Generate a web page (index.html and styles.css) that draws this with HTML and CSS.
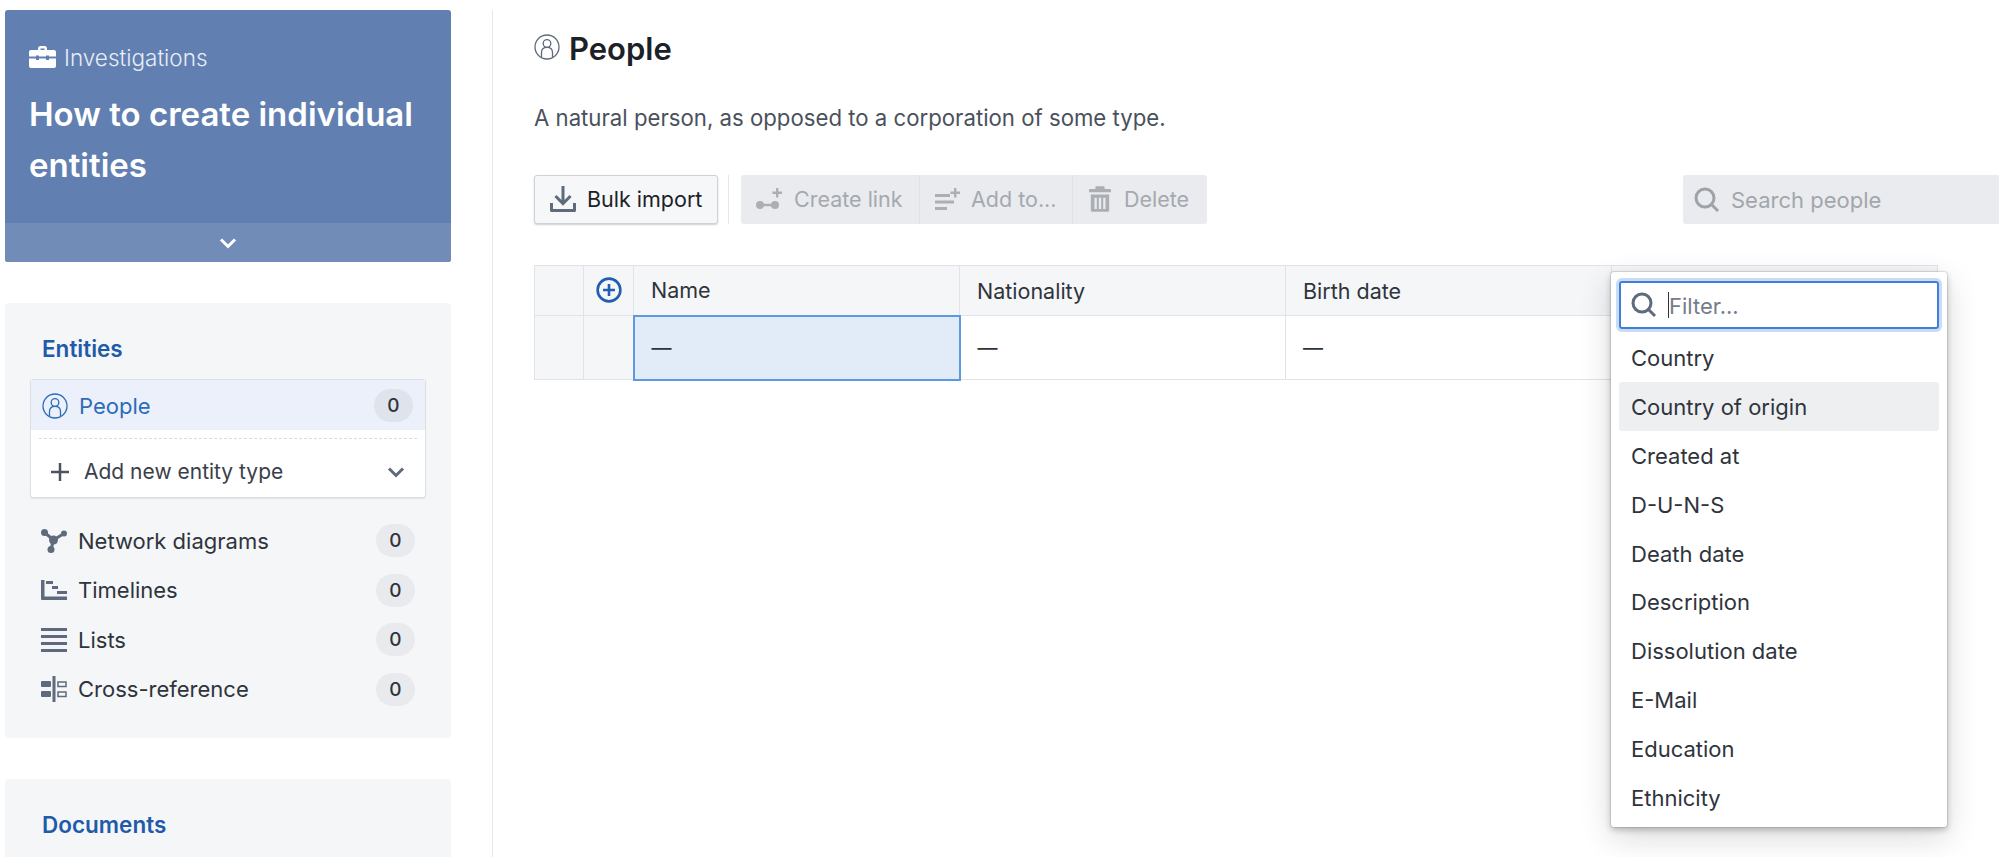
FILE: index.html
```html
<!DOCTYPE html>
<html lang="en">
<head>
  <meta charset="UTF-8">
  <title>People</title>
  <link rel="stylesheet" href="styles.css">
</head>
<body>
  <aside class="sidebar">
    <section class="hero">
      <div class="hero-body">
        <div class="hero-type">
          <svg class="hero-icon" viewBox="0 0 27 22"><path d="M9 4V2.500C9 1 10 0 11.500 0h4C17 0 18 1 18 2.500V4h7c1.200 0 2 .8 2 2v4.500H20V9.500h-3v1H10v-1H7v1H0V6c0-1.200.8-2 2-2zm2.500 0h4V2.500h-4zM0 12.500h7v1.500h3v-1.500h7v1.500h3v-1.500h7V20c0 1.200-.8 2-2 2H2c-1.200 0-2-.8-2-2z"/></svg>
          <span>Investigations</span>
        </div>
        <h1>How to create individual entities</h1>
      </div>
      <div class="hero-toggle">
        <svg class="chevron" viewBox="0 0 18 12"><path d="M2 2.500l7 7 7-7"/></svg>
      </div>
    </section>

    <section class="card card-entities">
      <h2>Entities</h2>
      <div class="schema-box">
        <div class="schema-active">
          <svg class="person-icon" viewBox="0 0 26 26"><circle cx="13" cy="13" r="12"/><circle cx="13" cy="9.500" r="3.800"/><path d="M7.500 23v-4.500c0-3 2-5.200 5.500-5.200s5.500 2.200 5.500 5.200V23"/></svg>
          <span class="row-label">People</span>
          <span class="count">0</span>
        </div>
        <div class="schema-add">
          <svg class="plus-icon" viewBox="0 0 20 20"><path d="M10 1v18M1 10h18"/></svg>
          <span class="row-label">Add new entity type</span>
          <svg class="chevron chevron-dark" viewBox="0 0 18 12"><path d="M2 2.500l7 7 7-7"/></svg>
        </div>
      </div>
      <ul class="nav-list">
        <li>
          <svg class="nav-icon" viewBox="0 0 26 24"><circle cx="3.500" cy="3.500" r="3.500"/><circle cx="23" cy="4.500" r="3"/><circle cx="10" cy="20.500" r="3.500"/><circle cx="12.500" cy="11" r="4.500"/><path class="nav-line" d="M3.500 3.500l9 7.500 10.500-6.500M12.500 11L10 20.500"/></svg>
          <span class="row-label">Network diagrams</span>
          <span class="count">0</span>
        </li>
        <li>
          <svg class="nav-icon" viewBox="0 0 26 20"><path d="M0 0h3.500v16.500H26V20H1a1 1 0 0 1-1-1zM5 1h7v3H5zM11 6h6v3h-6zM16 11h10v3H16z"/></svg>
          <span class="row-label">Timelines</span>
          <span class="count">0</span>
        </li>
        <li>
          <svg class="nav-icon" viewBox="0 0 26 24"><path d="M0 0h26v3H0zM0 7h26v3H0zM0 14h26v3H0zM0 21h26v3H0z"/></svg>
          <span class="row-label">Lists</span>
          <span class="count">0</span>
        </li>
        <li>
          <svg class="nav-icon" viewBox="0 0 26 26"><path d="M11.500 0h3v26h-3zM1 5h8a1 1 0 0 1 1 1v4a1 1 0 0 1-1 1H1a1 1 0 0 1-1-1V6a1 1 0 0 1 1-1zM1 15h8a1 1 0 0 1 1 1v4a1 1 0 0 1-1 1H1a1 1 0 0 1-1-1v-4a1 1 0 0 1 1-1z"/><path class="nav-outline" d="M17 6h8v4.500h-8zM17 16h8v4.500h-8z"/></svg>
          <span class="row-label">Cross-reference</span>
          <span class="count">0</span>
        </li>
      </ul>
    </section>

    <section class="card card-documents">
      <h2>Documents</h2>
    </section>
  </aside>

  <main class="content">
    <header class="page-title">
      <svg class="title-icon" viewBox="0 0 26 26"><circle cx="13" cy="13" r="12"/><circle cx="13" cy="9.500" r="3.800"/><path d="M7.500 23v-4.500c0-3 2-5.200 5.500-5.200s5.500 2.200 5.500 5.200V23"/></svg>
      <h1>People</h1>
    </header>
    <p class="description">A natural person, as opposed to a corporation of some type.</p>

    <div class="toolbar">
      <button class="btn-import">
        <svg class="tool-icon" viewBox="0 0 26 26"><path class="fill-dark" d="M11.500 0h3v14l5-5 2.100 2.100L13 19.700l-8.600-8.600L6.500 9l5 5zM0 17h3v6h20v-6h3v7.500a1.500 1.500 0 0 1-1.500 1.500h-23A1.500 1.500 0 0 1 0 24.500z"/></svg>
        Bulk import
      </button>
      <span class="tool-sep"></span>
      <div class="btn-group">
        <span class="btn-muted">
          <svg class="tool-icon" viewBox="0 0 26 22"><circle cx="4" cy="17" r="4"/><circle cx="19" cy="17" r="4"/><path d="M4 15.800h15v2.400H4zM20 0h2.400v3.600H26V6h-3.600v3.600H20V6h-3.600V3.600H20z"/></svg>
          Create link
        </span>
        <span class="btn-muted">
          <svg class="tool-icon" viewBox="0 0 26 22"><path d="M0 6h15v3H0zM0 12.500h19v3H0zM0 19h12v3H0zM19 0h2.400v3.600H25V6h-3.600v3.600H19V6h-3.600V3.600H19z"/></svg>
          Add to...
        </span>
        <span class="btn-muted">
          <svg class="tool-icon tool-trash" viewBox="0 0 24 28"><path d="M8 0h8a1 1 0 0 1 1 1v2h6a1 1 0 0 1 1 1v2.500H0V4a1 1 0 0 1 1-1h6V1a1 1 0 0 1 1-1zM2 9h20v17.500a1.500 1.500 0 0 1-1.500 1.500h-17A1.500 1.500 0 0 1 2 26.500zm4 3.500V25h2.500V12.500zm4.700 0V25h2.600V12.500zm4.800 0V25H18V12.500z" fill-rule="evenodd"/></svg>
          Delete
        </span>
      </div>
      <div class="search-box">
        <svg class="search-icon" viewBox="0 0 26 26"><circle cx="11" cy="11" r="9"/><path d="M17.500 17.500L24 24"/></svg>
        <span>Search people</span>
      </div>
    </div>

    <div class="grid-wrap">
      <table class="grid">
        <colgroup>
          <col class="col-index"><col class="col-add"><col class="col-data"><col class="col-data"><col class="col-data"><col class="col-data">
        </colgroup>
        <tr class="grid-head">
          <th></th>
          <th>
            <svg class="add-icon" viewBox="0 0 24 24"><circle cx="12" cy="12" r="10.500"/><path d="M12 6.500v11M6.500 12h11"/></svg>
          </th>
          <th>Name</th>
          <th>Nationality</th>
          <th>Birth date</th>
          <th></th>
        </tr>
        <tr class="grid-row">
          <td class="cell-side"></td>
          <td class="cell-side"></td>
          <td class="cell-selected">—</td>
          <td>—</td>
          <td>—</td>
          <td></td>
        </tr>
      </table>

      <div class="column-menu">
        <div class="filter-input">
          <svg class="search-icon search-dark" viewBox="0 0 26 26"><circle cx="11" cy="11" r="9"/><path d="M17.500 17.500L24 24"/></svg>
          <span class="caret"></span>
          <span class="filter-text">Filter...</span>
        </div>
        <ul class="menu-list">
          <li>Country</li>
          <li class="menu-active">Country of origin</li>
          <li>Created at</li>
          <li>D-U-N-S</li>
          <li>Death date</li>
          <li>Description</li>
          <li>Dissolution date</li>
          <li>E-Mail</li>
          <li>Education</li>
          <li>Ethnicity</li>
        </ul>
      </div>
    </div>
  </main>
</body>
</html>
```

FILE: styles.css
```css
* {
  box-sizing: border-box;
}
html, body {
  height: 100%;
}
body {
  margin: 0;
  display: flex;
  overflow: hidden;
  font-family: Inter, "Noto Sans", sans-serif;
  font-size: 22px;
  color: #2f343c;
  background: #fff;
}
h1, h2, p, ul {
  margin: 0;
  padding: 0;
}
ul {
  list-style: none;
}

/* sidebar */
.sidebar {
  flex: none;
  width: 493px;
  height: calc(100% - 10px);
  margin-top: 10px;
  padding: 0 41px 0 5px;
  border-right: 1px solid #e5e7ea;
}
.hero {
  height: 252px;
  margin-bottom: 41px;
  display: flex;
  flex-direction: column;
  border-radius: 3px;
  background: #6180b1;
  color: #fff;
  overflow: hidden;
}
.hero-body {
  flex: 1;
  padding: 35px 24px 0;
}
.hero-type {
  display: flex;
  align-items: center;
  gap: 8px;
  height: 24px;
  color: #e8edf5;
  font-weight: 300;
  font-size: 22.500px;
}
.hero-icon {
  width: 27px;
  height: 22px;
  fill: #fff;
}
.hero h1 {
  margin-top: 20px;
  font-size: 33px;
  font-weight: 600;
  line-height: 51px;
}
.hero-toggle {
  flex: none;
  height: 39px;
  display: flex;
  align-items: center;
  justify-content: center;
  background: #728cb8;
}
.chevron {
  width: 18px;
  height: 12px;
  fill: none;
  stroke: #fff;
  stroke-width: 3;
}
.chevron-dark {
  stroke: #5f6b7c;
}
.card {
  margin-bottom: 41px;
  padding: 32px 25px 0;
  border-radius: 4px;
  background: #f5f6f8;
}
.card-entities {
  height: 435px;
}
.card-documents {
  height: 78px;
  margin-bottom: 0;
  border-radius: 4px 4px 0 0;
}
.card h2 {
  margin: 0 0 0 12px;
  height: 28px;
  line-height: 28px;
  font-size: 22.500px;
  font-weight: 600;
  color: #215aa8;
}
.schema-box {
  margin-top: 16px;
  height: 119px;
  border: 1px solid #dcdfe3;
  border-radius: 3px;
  background: #fff;
  box-shadow: 0 1px 1px rgba(17, 20, 24, 0.08);
}
.schema-active {
  height: 50px;
  display: flex;
  align-items: center;
  padding: 1px 12px 0 11px;
  background: #ebf0fa;
  color: #2d6cb8;
}
.person-icon {
  flex: none;
  width: 26px;
  height: 26px;
  margin-right: 11px;
  fill: none;
  stroke: #2d6cb8;
  stroke-width: 1.300;
}
.row-label {
  flex: 1;
}
.count {
  flex: none;
  width: 39px;
  height: 33px;
  line-height: 34px;
  border-radius: 17px;
  text-align: center;
  font-size: 19px;
  font-weight: 500;
  color: #2f343c;
  background: #e8eaed;
}
.schema-active .count {
  background: #dee3ec;
}
.schema-add {
  position: relative;
  height: 67px;
  display: flex;
  align-items: center;
  padding: 16px 20px 0 19px;
  font-size: 21px;
  color: #3a404a;
}
.schema-add::before {
  content: "";
  position: absolute;
  top: 8px;
  left: 8px;
  right: 8px;
  border-top: 1px dashed #d8dbe0;
}
.plus-icon {
  flex: none;
  width: 20px;
  height: 20px;
  margin-right: 14px;
  fill: none;
  stroke: #4b5361;
  stroke-width: 2.500;
}
.nav-list {
  margin-top: 18px;
}
.nav-list li {
  height: 49.500px;
  display: flex;
  align-items: center;
  padding: 0 11px 0 11px;
}
.nav-icon {
  flex: none;
  width: 26px;
  height: 26px;
  margin-right: 11px;
  fill: #5f6b7c;
}
.nav-line {
  fill: none;
  stroke: #5f6b7c;
  stroke-width: 3;
}
.nav-outline {
  fill: none;
  stroke: #5f6b7c;
  stroke-width: 1.500;
}

/* main area */
.content {
  flex: 1;
  min-width: 0;
  padding: 0 0 0 41px;
}
.page-title {
  height: 48px;
  margin-top: 24px;
  display: flex;
  align-items: center;
  gap: 9px;
}
.title-icon {
  flex: none;
  width: 26px;
  height: 26px;
  margin-top: -3px;
  fill: none;
  stroke: #5f6b7c;
  stroke-width: 1.300;
}
.page-title h1 {
  font-size: 31px;
  font-weight: 600;
  color: #1c2127;
}
.description {
  margin-top: 31px;
  height: 30px;
  line-height: 30px;
  font-size: 22.200px;
  color: #4a515c;
}
.toolbar {
  margin-top: 42px;
  height: 49px;
  display: flex;
  align-items: stretch;
  font-size: 21.500px;
}
.btn-import {
  flex: none;
  width: 184px;
  display: flex;
  align-items: center;
  gap: 11px;
  padding: 0 0 2px 15px;
  border: 1px solid #cfd2d7;
  border-radius: 3px;
  background: #f6f7f9;
  box-shadow: 0 1px 2px rgba(17, 20, 24, 0.2);
  font: inherit;
  color: #1c2127;
}
.tool-icon {
  flex: none;
  width: 26px;
  height: 26px;
  fill: #abafb4;
}
.tool-icon .fill-dark {
  fill: #5f6b7c;
}
.tool-trash {
  width: 22px;
}
.tool-sep {
  flex: none;
  width: 1px;
  margin: 0 12px 0 10px;
  background: #e5e7ea;
}
.btn-group {
  flex: none;
  width: 466px;
  display: flex;
  border-radius: 3px;
  background: #e9ebef;
}
.btn-muted {
  display: flex;
  align-items: center;
  gap: 12px;
  padding: 0 0 2px 15px;
  white-space: nowrap;
  color: #a5a9af;
  border-left: 1px solid #e0e2e6;
}
.btn-muted:first-child {
  border-left: 0;
  width: 178px;
}
.btn-muted:nth-child(2) {
  width: 153px;
  gap: 10px;
}
.btn-muted:nth-child(3) {
  width: 135px;
  padding-left: 16px;
  gap: 13px;
}
.search-box {
  flex: none;
  width: 340px;
  margin-left: auto;
  margin-right: -24px;
  display: flex;
  align-items: center;
  gap: 11px;
  padding-left: 11px;
  border-radius: 3px;
  background: #e9ebee;
  font-size: 22px;
  color: #a2a6ac;
}
.search-icon {
  flex: none;
  width: 26px;
  height: 26px;
  fill: none;
  stroke: #9ea3a9;
  stroke-width: 3;
}
.search-dark {
  stroke: #5f6b7c;
}

/* table with its column menu */
.grid-wrap {
  position: relative;
  margin-top: 41px;
  width: 1403px;
}
.grid {
  width: 1403px;
  table-layout: fixed;
  border-collapse: collapse;
  border: 1px solid #e1e3e6;
}
.col-index {
  width: 49px;
}
.col-add {
  width: 50px;
}
.col-data {
  width: 326px;
}
.grid th, .grid td {
  border: 1px solid #e1e3e6;
  padding: 0 16px 0 17px;
  text-align: left;
  font-weight: 400;
  font-size: 21.500px;
}
.grid td {
  font-size: 20px;
}
.grid-head {
  height: 50px;
  background: #f5f6f8;
}
.grid-head th:nth-child(2) {
  padding: 4px 0 0;
  text-align: center;
}
.grid-row {
  height: 64px;
}
.grid .cell-side {
  background: #f5f6f8;
}
.grid .cell-selected {
  border: 2px solid #5b9ae0;
  background: #e1ecf8;
}
.add-icon {
  width: 26px;
  height: 26px;
  fill: none;
  stroke: #215db0;
  stroke-width: 2.400;
}
.column-menu {
  position: absolute;
  top: 7px;
  left: 1077px;
  width: 336px;
  height: 555px;
  padding: 9px 8px;
  border-radius: 3px;
  background: #fff;
  box-shadow: 0 0 0 1px rgba(17, 20, 24, 0.1), 0 3px 6px rgba(17, 20, 24, 0.25), 0 10px 32px rgba(17, 20, 24, 0.16);
}
.filter-input {
  height: 48px;
  display: flex;
  align-items: center;
  padding-left: 10px;
  border: 2px solid #3e7fd9;
  border-radius: 3px;
  box-shadow: 0 0 0 3px rgba(45, 114, 210, 0.25);
  color: #757d88;
}
.filter-text {
  margin-top: 2px;
}
.caret {
  flex: none;
  width: 1px;
  height: 26px;
  margin: 0 0 0 11px;
  background: #2f343c;
}
.menu-list {
  margin-top: 4px;
}
.menu-list li {
  height: 48.900px;
  line-height: 51px;
  padding: 0 12px;
  border-radius: 3px;
}
.menu-list .menu-active {
  background: #eeeff1;
}
```
